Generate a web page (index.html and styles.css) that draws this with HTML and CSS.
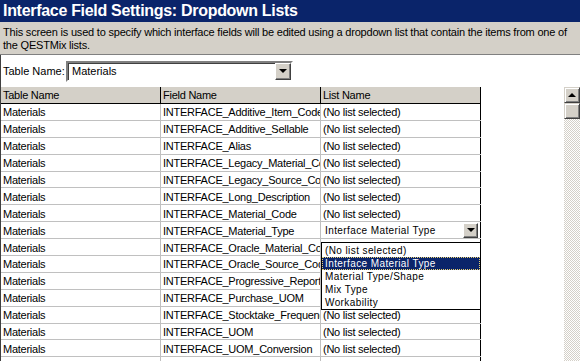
FILE: index.html
```html
<!DOCTYPE html>
<html>
<head>
    <meta charset="UTF-8" />
    <title>Interface Field Settings</title>
    <link rel="stylesheet" href="styles.css">
</head>
<body>
    <div class="title">Interface Field Settings: Dropdown Lists</div>
    <div class="desc">This screen is used to specify which interface fields will be edited using a dropdown list that contain the items from one of the QESTMix lists.</div>
    <div class="panel">
        <div class="filter">
            <span class="filter-label">Table Name:</span>
            <div class="combo">
                <span class="combo-text">Materials</span>
                <span class="btn"><span class="arrow"></span></span>
            </div>
        </div>
        <div class="grid-area">
            <div class="grid-wrap">
                <table class="grid">
                    <thead>
                        <tr><th>Table Name</th><th>Field Name</th><th class="last">List Name</th></tr>
                    </thead>
                    <tbody>
                        <tr><td>Materials</td><td>INTERFACE_Additive_Item_Code</td><td class="last">(No list selected)</td></tr>
                        <tr><td>Materials</td><td>INTERFACE_Additive_Sellable</td><td class="last">(No list selected)</td></tr>
                        <tr><td>Materials</td><td>INTERFACE_Alias</td><td class="last">(No list selected)</td></tr>
                        <tr><td>Materials</td><td>INTERFACE_Legacy_Material_Code</td><td class="last">(No list selected)</td></tr>
                        <tr><td>Materials</td><td>INTERFACE_Legacy_Source_Code</td><td class="last">(No list selected)</td></tr>
                        <tr><td>Materials</td><td>INTERFACE_Long_Description</td><td class="last">(No list selected)</td></tr>
                        <tr><td>Materials</td><td>INTERFACE_Material_Code</td><td class="last">(No list selected)</td></tr>
                        <tr><td>Materials</td><td>INTERFACE_Material_Type</td><td class="last edit">
                            <div class="cell-combo">
                                <span class="small">Interface Material Type</span>
                                <span class="btn small-btn"><span class="arrow"></span></span>
                            </div>
                        </td></tr>
                        <tr><td>Materials</td><td>INTERFACE_Oracle_Material_Code</td><td class="last">(No list selected)</td></tr>
                        <tr><td>Materials</td><td>INTERFACE_Oracle_Source_Code</td><td class="last">(No list selected)</td></tr>
                        <tr><td>Materials</td><td>INTERFACE_Progressive_Report</td><td class="last">(No list selected)</td></tr>
                        <tr><td>Materials</td><td>INTERFACE_Purchase_UOM</td><td class="last">(No list selected)</td></tr>
                        <tr><td>Materials</td><td>INTERFACE_Stocktake_Frequency</td><td class="last">(No list selected)</td></tr>
                        <tr><td>Materials</td><td>INTERFACE_UOM</td><td class="last">(No list selected)</td></tr>
                        <tr><td>Materials</td><td>INTERFACE_UOM_Conversion</td><td class="last">(No list selected)</td></tr>
                        <tr><td>Materials</td><td>INTERFACE_Volume</td><td class="last">(No list selected)</td></tr>
                    </tbody>
                </table>
                <!-- open dropdown of the edited cell -->
                <ul class="droplist">
                    <li>(No list selected)</li>
                    <li class="selected">Interface Material Type</li>
                    <li>Material Type/Shape</li>
                    <li>Mix Type</li>
                    <li>Workability</li>
                </ul>
            </div>
            <div class="scrollbar">
                <div class="sb-btn"><span class="up"></span></div>
                <div class="sb-thumb"></div>
                <div class="sb-track"></div>
            </div>
        </div>
    </div>
</body>
</html>
```

FILE: styles.css
```css
body {
    margin: 0;
    width: 580px;
    height: 361px;
    overflow: hidden;
    background: #fff;
    color: #000;
    font-family: 'Liberation Sans', Arial, sans-serif;
    font-size: 11px;
}
.title {
    height: 22px;
    line-height: 22px;
    background: #0a246a;
    color: #fff;
    font-weight: bold;
    font-size: 16px;
    letter-spacing: -0.3px;
    padding-left: 3px;
    white-space: nowrap;
}
.desc {
    background: #d4d0c8;
    height: 28px;
    padding: 4px 3px 0;
    line-height: 13px;
    letter-spacing: -0.2px;
    border-bottom: 1px solid #808080;
}
.panel {
    border-left: 1px solid #404040;
}
.filter {
    display: flex;
    align-items: center;
    height: 32px;
    padding-left: 2px;
}
.filter-label {
    width: 63px;
}
.combo {
    display: flex;
    align-items: center;
    width: 219px;
    height: 17px;
    border: 2px solid;
    border-color: #808080 #fff #fff #808080;
    box-shadow: inset 1px 1px 0 #404040;
    padding: 0 0 0 4px;
}
.combo-text {
    flex: 1;
}
.btn {
    display: flex;
    align-items: center;
    justify-content: center;
    width: 14px;
    height: 15px;
    background: #d4d0c8;
    border: 1px solid;
    border-color: #fff #404040 #404040 #fff;
    box-shadow: inset -1px -1px 0 #808080;
}
.arrow {
    width: 0;
    height: 0;
    border-left: 4px solid transparent;
    border-right: 4px solid transparent;
    border-top: 4px solid #000;
}
.grid-area {
    display: flex;
    align-items: flex-start;
    justify-content: space-between;
}
.grid-wrap {
    position: relative;
}
.grid {
    border-collapse: collapse;
    table-layout: fixed;
    width: 480px;
}
.grid th, .grid td {
    width: 157px;
    height: 13.9px;
    padding: 2px 0 0 2px;
    border-right: 1px solid #c0c0c0;
    border-bottom: 1px solid #c0c0c0;
    white-space: nowrap;
    overflow: hidden;
    text-align: left;
    font-weight: normal;
    line-height: 13px;
    letter-spacing: -0.25px;
}
.grid th {
    background: #d4d0c8;
    border-right: 1px solid #000;
    border-bottom: 1px solid #000;
    height: 16px;
    line-height: 16px;
    padding-top: 0;
}
.grid .last {
    border-right: 1px solid #000;
}
.grid td.edit {
    padding: 0;
    height: 15.9px;
}
.cell-combo {
    display: flex;
    align-items: center;
    height: 15px;
    padding: 0 2px 0 4px;
}
.small, .droplist {
    font-size: 10px;
    letter-spacing: 0.4px;
}
.small {
    flex: 1;
}
.small-btn {
    width: 13px;
    height: 13px;
}
.droplist {
    position: absolute;
    left: 320px;
    top: 155px;
    width: 158px;
    margin: 0;
    padding: 0;
    list-style: none;
    background: #fff;
    border: 1px solid #000;
}
.droplist li {
    height: 13px;
    line-height: 13px;
    padding-left: 3px;
}
.droplist li:first-child {
    margin-top: 1px;
}
.droplist .selected {
    background: #0a246a;
    color: #fff;
    outline: 1px dotted #e8d070;
    outline-offset: -1px;
}
.scrollbar {
    width: 16px;
    height: 274px;
    display: flex;
    flex-direction: column;
}
.sb-btn, .sb-thumb {
    height: 14px;
    background: #d4d0c8;
    border: 1px solid;
    border-color: #d4d0c8 #404040 #404040 #d4d0c8;
    box-shadow: inset 1px 1px 0 #fff, inset -1px -1px 0 #808080;
    display: flex;
    align-items: center;
    justify-content: center;
}
.up {
    width: 0;
    height: 0;
    border-left: 4px solid transparent;
    border-right: 4px solid transparent;
    border-bottom: 4px solid #000;
}
.sb-track {
    flex: 1;
    background: conic-gradient(#d4d0c8 25%, #fff 0 50%, #d4d0c8 0 75%, #fff 0) 0 0 / 2px 2px;
}
```
